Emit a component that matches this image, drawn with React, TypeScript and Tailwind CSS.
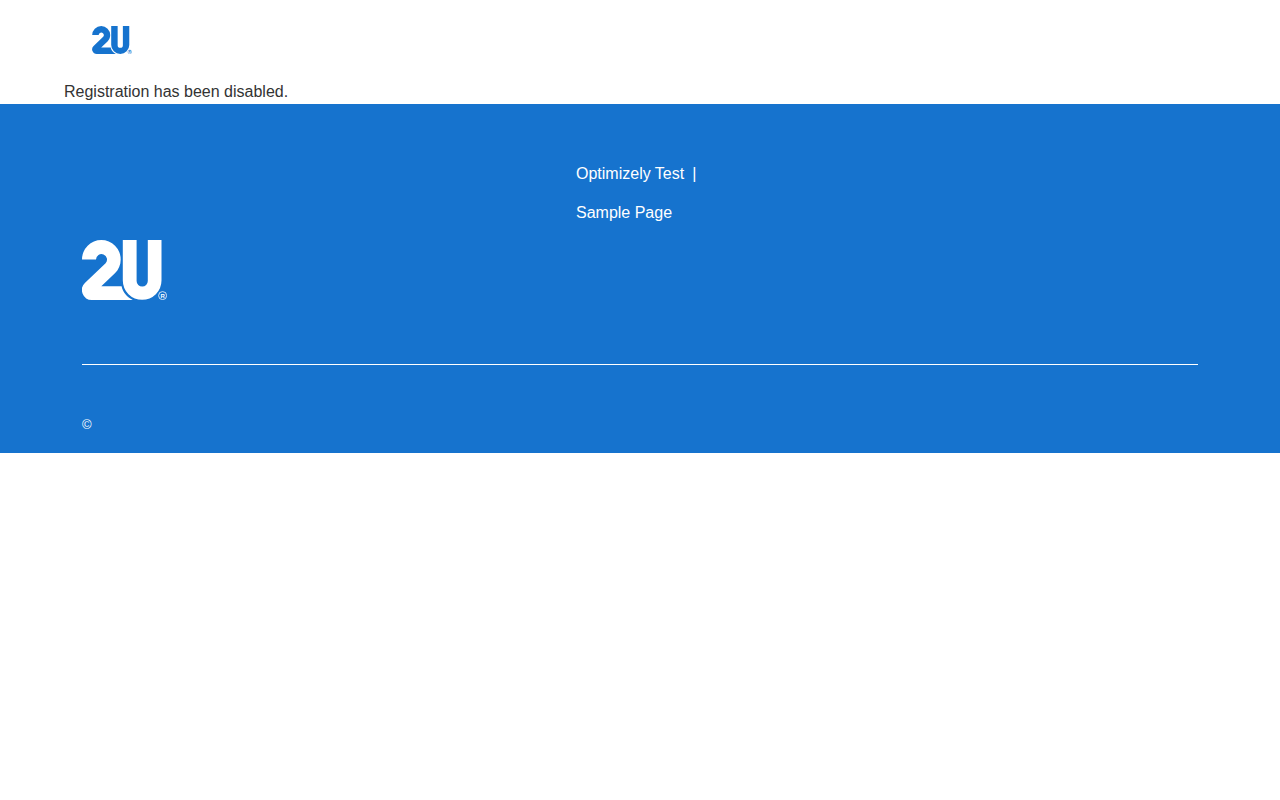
type LogoProps = {
  className?: string;
};

const footerLinks = [
  { label: "Optimizely Test", href: "#optimizely-test" },
  { label: "Sample Page", href: "#sample-page" },
];

function Logo({ className }: LogoProps) {
  return (
    <svg viewBox="0 0 85 60" className={className} fill="currentColor" role="img" aria-label="2U">
      <path d="M0 19.5A19.350 19.5 0 0 1 38.700 19.5c0 5.500-2.100 10.200-5.800 13.800L19.300 46.300H39.600C40.800 52.200 45 57.200 50.800 60H10A10 10 0 0 1 3.100 42.700L23.600 23.300A5.500 5.500 0 1 0 14 19.500Z" />
      <path d="M40.800 0H54.600V41a5.600 5.600 0 0 0 11.200 0V0H79.500V40.500a19.350 19.350 0 0 1-38.700 0Z" />
      <circle cx="80.600" cy="55.600" r="4" fill="none" stroke="currentColor" strokeWidth="0.8" />
      <text
        x="80.700"
        y="57.800"
        textAnchor="middle"
        fontSize="6"
        fontWeight="700"
        fontFamily="Liberation Sans, sans-serif"
      >
        R
      </text>
    </svg>
  );
}

export default function App() {
  return (
    <div className="bg-white font-['Liberation_Sans',Arial,sans-serif] text-base text-[#333333]">
      <header className="mx-auto flex h-20 w-9/10 items-center px-7">
        <a href="#home">
          <Logo className="h-7 w-10 text-[#1673ce]" />
        </a>
      </header>

      <main className="mx-auto w-9/10">
        <p>Registration has been disabled.</p>
      </main>

      <footer className="bg-[#1673ce] text-white">
        <div className="mx-auto w-9/10 px-[18px] pb-[18px]">
          <div className="grid grid-cols-[494px_1fr] items-end border-b border-white pt-14 pb-16">
            <a href="#home">
              <Logo className="h-[60px] w-[85px]" />
            </a>
            <ul className="flex flex-col gap-[15px] self-start pt-[2px] pb-[75px]">
              {footerLinks.map((link, index) => (
                <li key={link.label} className="flex gap-2">
                  <a href={link.href}>{link.label}</a>
                  {index < footerLinks.length - 1 && <span>|</span>}
                </li>
              ))}
            </ul>
          </div>
          <p className="pt-[50px] text-[13px] leading-5">©</p>
        </div>
      </footer>
    </div>
  );
}
